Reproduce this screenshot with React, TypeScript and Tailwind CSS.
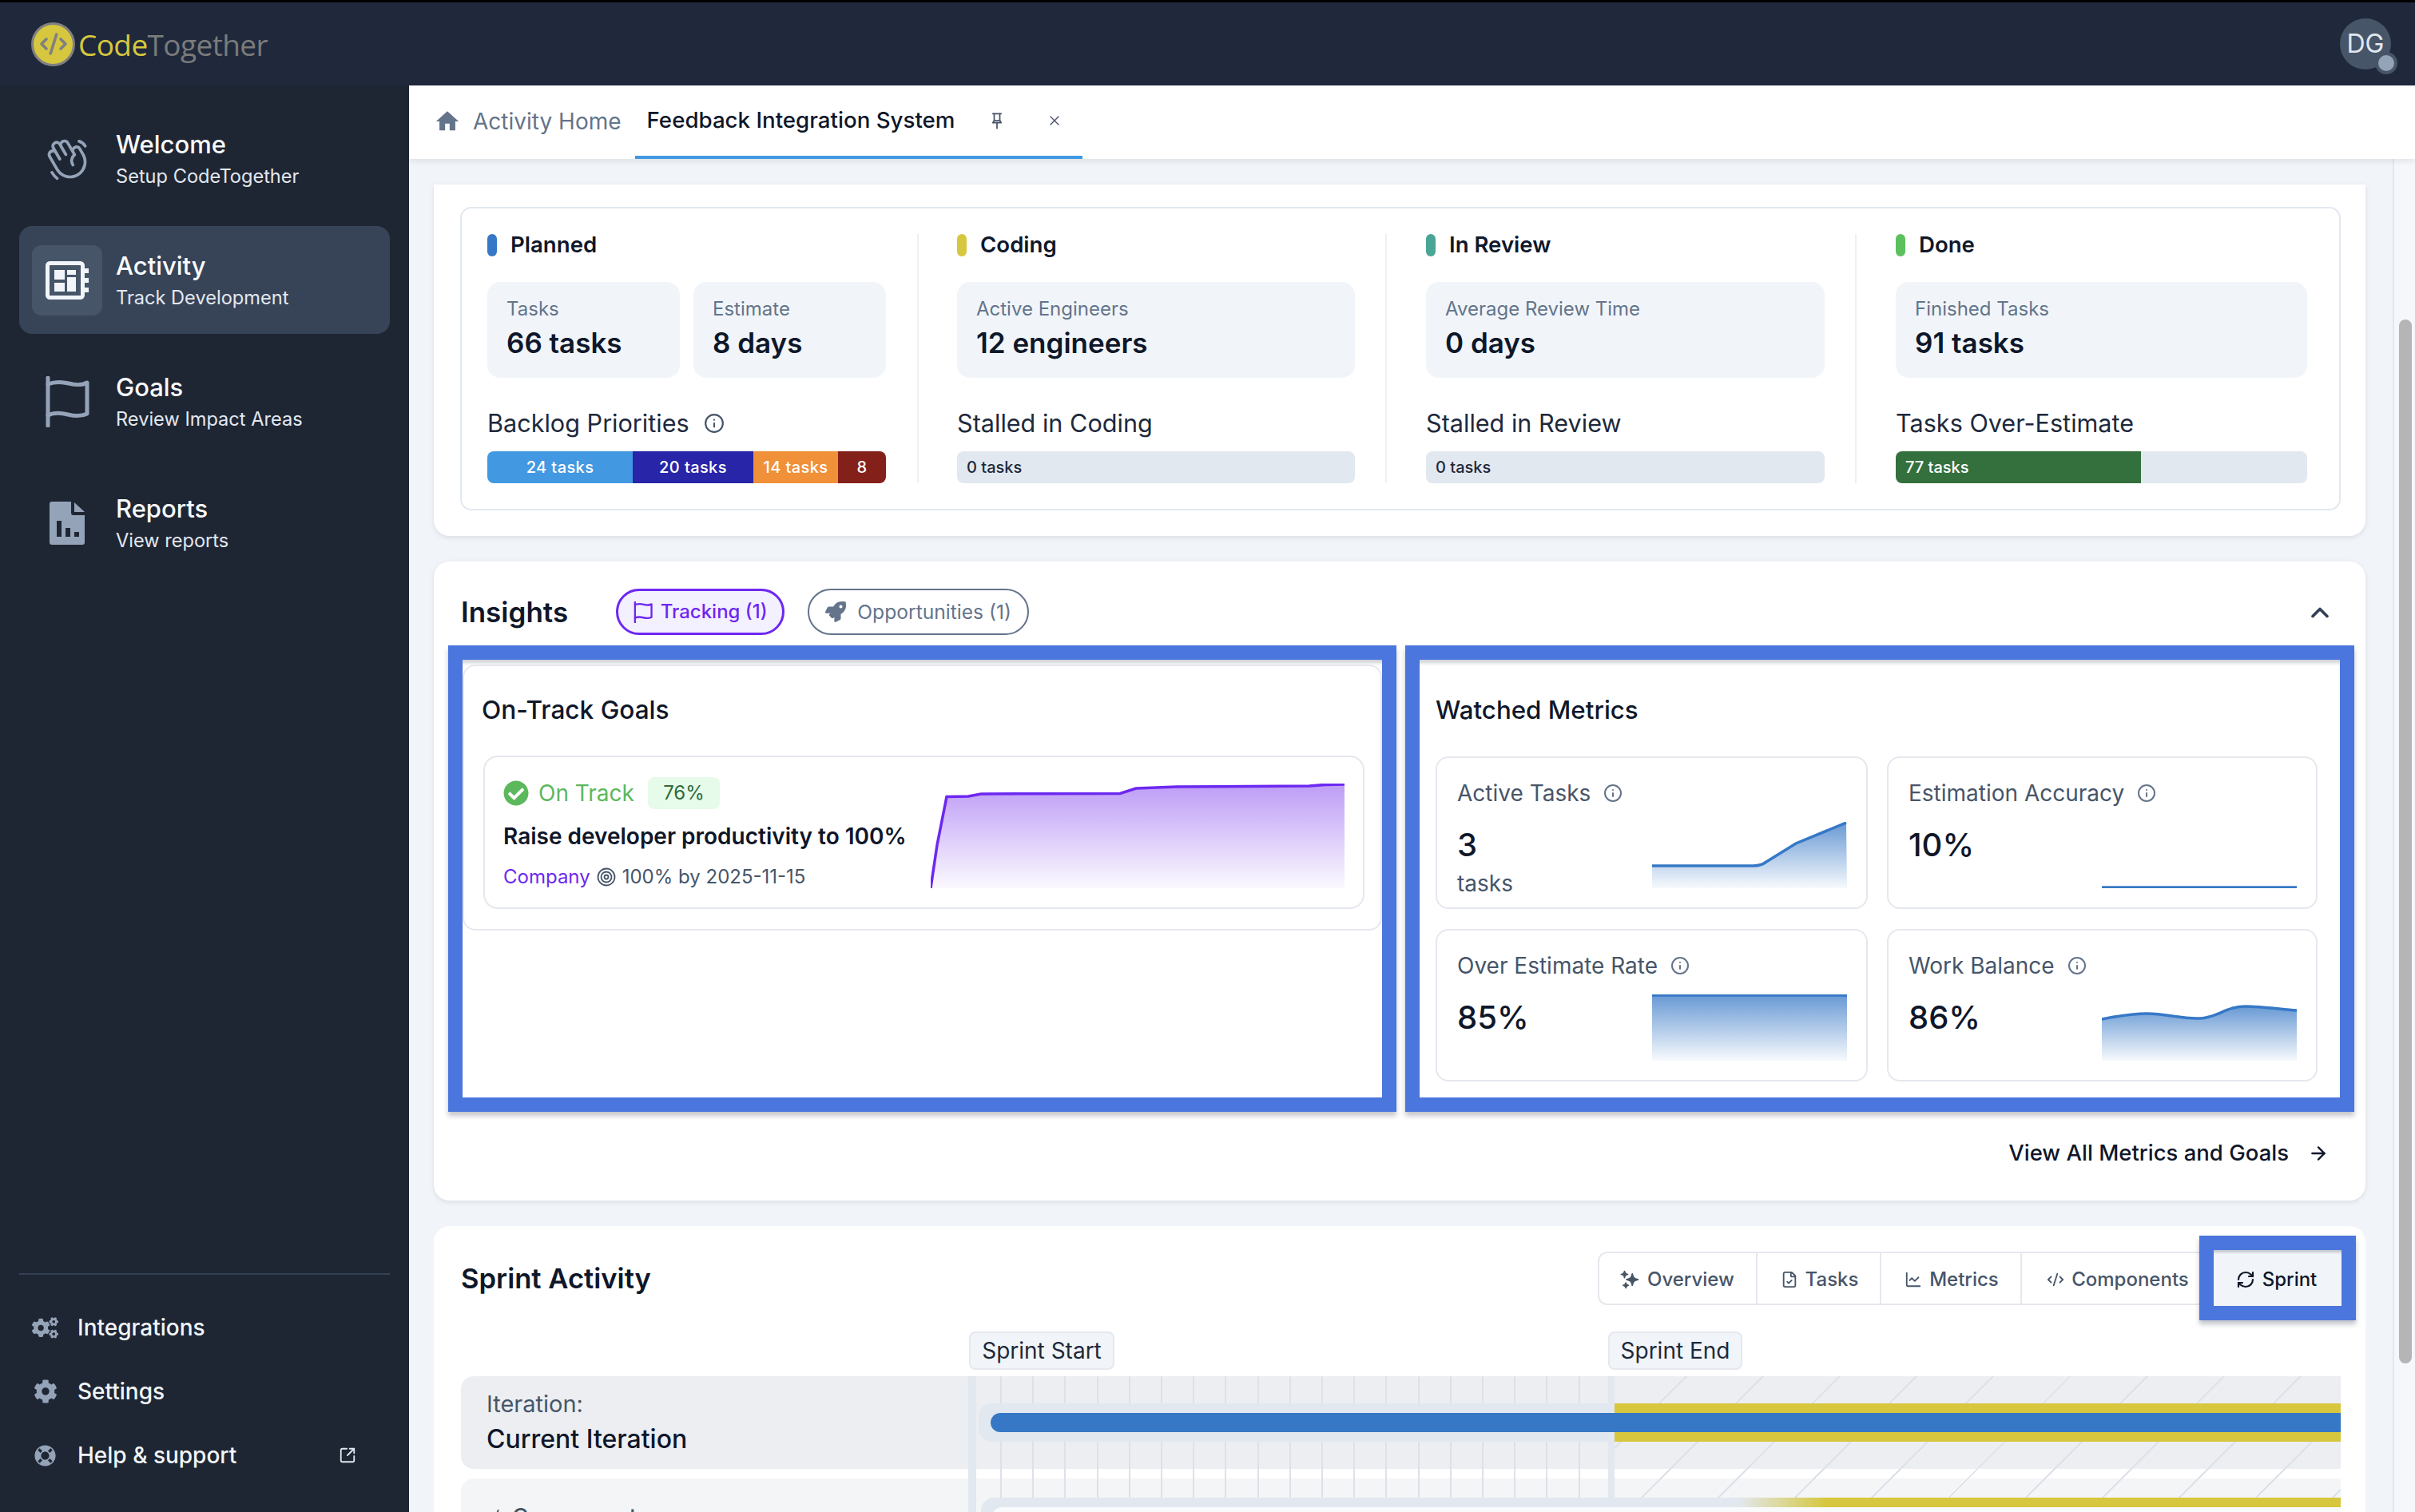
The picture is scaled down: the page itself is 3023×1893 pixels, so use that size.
import React from "react";
import { ArrowRight, ChevronUp, CodeXml, FileCheck, Info, ChartLine, RefreshCw, SquareArrowOutUpRight, X } from "lucide-react";
import { FaCheckCircle, FaCog, FaCogs, FaLifeRing, FaRocket } from "react-icons/fa";
import { MdHome } from "react-icons/md";
import { HiSparkles } from "react-icons/hi2";
import { PiHandWaving } from "react-icons/pi";

function FlagIcon({ className = "", sw = 5 }: { className?: string; sw?: number }) {
  return (
    <svg viewBox="0 0 56 64" fill="none" stroke="currentColor" strokeWidth={sw} strokeLinecap="round" strokeLinejoin="round" className={className}>
      <path d="M4 2v60" />
      <path d="M4 10C14 6 22 7 30 9s16 3 23-1v39c-8 4-16 3-24 1S12 45 4 49" />
    </svg>
  );
}

function ActivityIcon() {
  return (
    <svg viewBox="0 0 54 48" className="w-[54px] h-[48px]" fill="none">
      <rect x="2.5" y="2.5" width="44" height="43" rx="3" stroke="#f1f5f9" strokeWidth="5" />
      <rect x="11" y="11" width="13" height="12" fill="#f1f5f9" />
      <rect x="11" y="27" width="13" height="11" fill="#f1f5f9" />
      <rect x="27" y="11" width="11" height="6" fill="#f1f5f9" />
      <rect x="27" y="20" width="11" height="18" fill="#f1f5f9" />
      <rect x="48" y="9" width="6" height="6" fill="#f1f5f9" />
      <rect x="48" y="21" width="6" height="6" fill="#f1f5f9" />
      <rect x="48" y="33" width="6" height="6" fill="#f1f5f9" />
    </svg>
  );
}

function ReportIcon() {
  return (
    <svg viewBox="0 0 44 54" className="w-[44px] h-[54px]">
      <path
        fillRule="evenodd"
        fill="#94a3b8"
        d="M3 0h24v14a3 3 0 0 0 3 3h14v34a3 3 0 0 1-3 3H3a3 3 0 0 1-3-3V3a3 3 0 0 1 3-3zM9 24v20h6V24zM20 33v11h6V33zM31 38v6h6v-6z"
      />
      <path fill="#94a3b8" d="M31 1l13 12H31z" />
    </svg>
  );
}

function PinIcon() {
  return (
    <svg viewBox="0 0 16 24" className="w-[14px] h-[22px]" fill="none" stroke="#475569" strokeWidth="2" strokeLinecap="round" strokeLinejoin="round">
      <path d="M2 2h12" />
      <path d="M4 2v10M12 2v10" />
      <path d="M2 15l2-3h8l2 3z" />
      <path d="M8 15v8" />
    </svg>
  );
}

function Logo() {
  return (
    <div className="flex items-center gap-[4px]">
      <div className="w-[55px] h-[55px] rounded-full bg-[#d6c73e] border-[3px] border-[#808080] flex items-center justify-center">
        <CodeXml size={36} strokeWidth={2.4} className="text-[#808080]" />
      </div>
      <div className="font-['Open_Sans',sans-serif] text-[37px] leading-none tracking-[-0.6px]">
        <span className="text-[#d6c73e]">Code</span>
        <span className="text-[#7b7b7b]">Together</span>
      </div>
    </div>
  );
}

function NavItem({ icon, title, sub, active }: { icon: React.ReactNode; title: string; sub: string; active?: boolean }) {
  return (
    <div className={`flex items-center h-[135px] rounded-[16px] pl-[16px] gap-[17px] ${active ? "bg-[#374357]" : ""}`}>
      <div className={`w-[88px] h-[88px] rounded-[12px] flex items-center justify-center ${active ? "bg-[#475569]" : ""}`}>{icon}</div>
      <div className="flex flex-col">
        <div className="text-[31px] leading-[44px] font-medium text-[#f8fafc]">{title}</div>
        <div className="text-[23.6px] leading-[36px] text-[#e2e8f0]">{sub}</div>
      </div>
    </div>
  );
}

function FootItem({ icon, label, right }: { icon: React.ReactNode; label: string; right?: React.ReactNode }) {
  return (
    <div className="flex items-center h-[80px] pl-[16px] pr-[42px]">
      <div className="w-[33px] flex items-center justify-center text-[#94a3b8]">{icon}</div>
      <div className="ml-[24px] text-[28px] font-medium text-[#f1f5f9] flex-1">{label}</div>
      {right}
    </div>
  );
}

function Stat({ label, value, className = "flex-1" }: { label: string; value: string; className?: string }) {
  return (
    <div className={`h-[120px] rounded-[16px] bg-[#f1f5f9] pl-[24px] pt-[18px] ${className}`}>
      <div className="text-[24px] leading-[32px] text-[#64748b]">{label}</div>
      <div className="mt-[3px] text-[35px] leading-[46px] font-semibold text-[#0f172a]">{value}</div>
    </div>
  );
}

function Col({ color, title, children, className }: { color: string; title: string; children: React.ReactNode; className: string }) {
  return (
    <div className={`h-[312px] flex flex-col ${className}`}>
      <div className="flex items-center h-[28px]">
        <div className="w-[12px] h-[28px] rounded-full" style={{ backgroundColor: color }} />
        <div className="ml-[17px] text-[27.6px] font-semibold text-[#0f172a]">{title}</div>
      </div>
      {children}
    </div>
  );
}

function Sub({ children }: { children: React.ReactNode }) {
  return <div className="mt-[37px] h-[40px] flex items-center text-[30.6px] text-[#1e293b]">{children}</div>;
}

function EmptyBar() {
  return (
    <div className="mt-[15px] h-[40px] rounded-[8px] bg-[#e2e8f0] flex items-center pl-[12px] text-[20px] font-medium text-[#1e293b]">0 tasks</div>
  );
}

function OverviewCard() {
  return (
    <div className="rounded-b-[20px] bg-white pl-[33px] pr-[31px] pt-[28px] pb-[32px] shadow-[0_2px_6px_rgba(15,23,42,0.1)]">
      <div className="rounded-[14px] border-2 border-[#e2e8f0] h-[380px] pl-[32px] pt-[32px] flex">
        <Col color="#3678c6" title="Planned" className="w-[540px] pr-[39px] border-r-2 border-[#edf0f5]">
          <div className="mt-[32px] flex gap-[17px]">
            <Stat label="Tasks" value="66 tasks" />
            <Stat label="Estimate" value="8 days" />
          </div>
          <Sub>
            Backlog Priorities
            <Info size={26} strokeWidth={2} className="ml-[18px] text-[#475569]" />
          </Sub>
          <div className="mt-[15px] h-[40px] rounded-[8px] overflow-hidden flex text-[20px] font-medium text-white tracking-[0.4px]">
            <div className="w-[182px] bg-[#4299e1] flex items-center justify-center">24 tasks</div>
            <div className="w-[151px] bg-[#2825a8] flex items-center justify-center">20 tasks</div>
            <div className="w-[106px] bg-[#f09038] flex items-center justify-center">14 tasks</div>
            <div className="flex-1 bg-[#84201a] flex items-center justify-center">8</div>
          </div>
        </Col>
        <Col color="#d6c73e" title="Coding" className="w-[586px] pl-[48px] pr-[38px] border-r-2 border-[#edf0f5]">
          <div className="mt-[32px] flex">
            <Stat label="Active Engineers" value="12 engineers" />
          </div>
          <Sub>Stalled in Coding</Sub>
          <EmptyBar />
        </Col>
        <Col color="#4aa596" title="In Review" className="w-[588px] pl-[49px] pr-[38px] border-r-2 border-[#edf0f5]">
          <div className="mt-[32px] flex">
            <Stat label="Average Review Time" value="0 days" />
          </div>
          <Sub>Stalled in Review</Sub>
          <EmptyBar />
        </Col>
        <Col color="#5cc05f" title="Done" className="w-[564px] pl-[49px]">
          <div className="mt-[32px] flex">
            <Stat label="Finished Tasks" value="91 tasks" />
          </div>
          <Sub>Tasks Over-Estimate</Sub>
          <div className="mt-[15px] h-[40px] rounded-[8px] overflow-hidden bg-[#e2e8f0] flex">
            <div className="w-[307px] bg-[#33703d] flex items-center pl-[12px] text-[20px] font-medium text-white">77 tasks</div>
          </div>
        </Col>
      </div>
    </div>
  );
}

function GoalChart() {
  const line = "M0 131 L8 77 L20 16.5 L47 16 L63 13 L237 12.4 L257 6 L308 4 L474 3 L494 1.4 L518 1";
  return (
    <svg viewBox="0 0 518 131" className="w-[518px] h-[131px] shrink-0">
      <defs>
        <linearGradient id="gv" x1="0" y1="0" x2="0" y2="1">
          <stop offset="0" stopColor="#7c3aed" stopOpacity="0.5" />
          <stop offset="1" stopColor="#7c3aed" stopOpacity="0.03" />
        </linearGradient>
      </defs>
      <path d={`${line} L518 131 Z`} fill="url(#gv)" />
      <path d={line} fill="none" stroke="#6d28f0" strokeWidth="3.5" />
    </svg>
  );
}

function MetricChart({ id, line }: { id: string; line: string }) {
  return (
    <svg viewBox="0 0 244 83" className="w-[244px] h-[83px] shrink-0">
      <defs>
        <linearGradient id={id} x1="0" y1="0" x2="0" y2="1">
          <stop offset="0" stopColor="#3678c6" stopOpacity="0.75" />
          <stop offset="1" stopColor="#3678c6" stopOpacity="0.04" />
        </linearGradient>
      </defs>
      <path d={`${line} L244 83 L0 83 Z`} fill={`url(#${id})`} />
      <path d={line} fill="none" stroke="#3678c6" strokeWidth="3.5" />
    </svg>
  );
}

function Metric({ label, value, unit, id, line }: { label: string; value: string; unit?: string; id: string; line: string }) {
  return (
    <div className="h-[191px] rounded-[16px] border-2 border-[#e5e8ee] pl-[25px] pr-[24px] pt-[28px]">
      <div className="flex items-center h-[32px] text-[28px] text-[#475569]">
        {label}
        <Info size={24} strokeWidth={2} className="ml-[16px] text-[#64748b]" />
      </div>
      <div className="flex justify-between mt-[20px]">
        <div className="pt-[5px]">
          <div className="text-[40px] leading-[48px] font-medium text-[#0f172a]">{value}</div>
          {unit && <div className="mt-[6px] text-[28px] leading-[36px] text-[#475569]">{unit}</div>}
        </div>
        <MetricChart id={id} line={line} />
      </div>
    </div>
  );
}

function InsightsCard() {
  return (
    <div className="mt-[32px] rounded-[20px] bg-white pl-[18px] pr-[14px] pt-[34px] h-[800px] shadow-[0_2px_6px_rgba(15,23,42,0.1)]">
      <div className="flex items-center h-[58px] pl-[16px] pr-[25px]">
        <div className="text-[35px] font-semibold text-[#0f172a] pt-[1px]">Insights</div>
        <div className="ml-[60px] h-[58px] w-[211px] rounded-full border-[3px] border-[#6d28f0] bg-[#f3f0ff] flex items-center justify-center gap-[10px] text-[24px] font-medium text-[#6d28f0]">
          <FlagIcon className="w-[24px] h-[27px]" sw={5.5} />
          Tracking (1)
        </div>
        <div className="ml-[29px] h-[58px] w-[277px] rounded-full border-2 border-[#64748b] flex items-center justify-center gap-[14px] text-[24.6px] text-[#64748b]">
          <FaRocket size={26} />
          Opportunities (1)
        </div>
        <ChevronUp size={36} strokeWidth={2.4} className="ml-auto mt-[2px] text-[#334155]" />
      </div>
      <div className="mt-[13px] flex gap-[11px] h-[584px]">
        <div className="w-[1187px] border-[18px] border-[#4a76dd] bg-white pt-[6px] shadow-[0_5px_6px_rgba(15,23,42,0.25),inset_0_6px_4px_-2px_rgba(15,23,42,0.2)]">
          <div className="rounded-[16px] border-2 border-[#e5e8ee] h-[333px] pl-[22px] pr-[20px] pt-[35px]">
            <div className="h-[40px] flex items-center text-[31.6px] font-medium text-[#0f172a]">On-Track Goals</div>
            <div className="mt-[37px] ml-[2px] h-[192px] rounded-[18px] border-2 border-[#e5e8ee] flex justify-between pl-[23px] pr-[23px] pt-[25px]">
              <div>
                <div className="flex items-center h-[40px]">
                  <FaCheckCircle size={32} className="text-[#5cb85c]" />
                  <div className="ml-[12px] text-[28px] text-[#5cb85c]">On Track</div>
                  <div className="ml-[17px] w-[90px] h-[40px] rounded-[8px] bg-[#e6fbe9] flex items-center justify-center text-[24px] text-[#2f6b3a]">76%</div>
                </div>
                <div className="mt-[16px] h-[36px] flex items-center text-[28px] font-semibold text-[#0f172a]">Raise developer productivity to 100%</div>
                <div className="mt-[17px] h-[32px] flex items-center text-[24px] text-[#475569]">
                  <span className="text-[#6d28f0]">Company</span>
                  <svg viewBox="0 0 24 24" className="w-[24px] h-[24px] mx-[8px]" fill="none" stroke="#475569" strokeWidth="1.8">
                    <circle cx="12" cy="12" r="10.5" />
                    <circle cx="12" cy="12" r="6.5" />
                    <circle cx="12" cy="12" r="2.5" />
                  </svg>
                  100% by 2025-11-15
                </div>
              </div>
              <div className="pt-[8px]">
                <GoalChart />
              </div>
            </div>
          </div>
        </div>
        <div className="flex-1 border-[18px] border-[#4a76dd] bg-white pt-[8px] shadow-[0_5px_6px_rgba(15,23,42,0.25),inset_0_6px_4px_-2px_rgba(15,23,42,0.2)]">
          <div className="pl-[20px] pr-[28px] pt-[35px]">
            <div className="h-[40px] flex items-center text-[31.3px] font-medium text-[#0f172a]">Watched Metrics</div>
            <div className="mt-[38px] grid grid-cols-[541px_539px] gap-x-[24px] gap-y-[25px]">
              <Metric label="Active Tasks" value="3" unit="tasks" id="m1" line="M0 55 L127 55 C135 55 139 53 143 50 L180 27 L243 1" />
              <Metric label="Estimation Accuracy" value="10%" id="m2" line="M0 82 L244 82" />
              <Metric label="Over Estimate Rate" value="85%" id="m3" line="M0 1 L244 1" />
              <Metric label="Work Balance" value="86%" id="m4" line="M0 31 C20 27 40 24 57 24 C80 24 100 31 123 30 C145 29 155 15 180 15 C200 15 220 18 244 20" />
            </div>
          </div>
        </div>
      </div>
      <div className="mt-[34px] flex items-center justify-end pr-[32px] h-[36px] text-[27.5px] font-medium text-[#0f172a]">
        View All Metrics and Goals
        <ArrowRight size={26} strokeWidth={2.2} className="ml-[24px]" />
      </div>
    </div>
  );
}

function SprintTab({ icon, label, w }: { icon: React.ReactNode; label: string; w: string }) {
  return (
    <div className={`${w} flex items-center justify-center gap-[9px] pt-[3px] text-[24px] font-medium text-[#475569]`}>
      {icon}
      {label}
    </div>
  );
}

function SprintCard() {
  return (
    <div className="mt-[32px] rounded-t-[20px] bg-white pt-[12px] pl-[34px] pr-[12px] h-[400px]">
      <div className="flex items-center justify-between">
        <div className="text-[34.6px] font-semibold text-[#0f172a] pt-[2px]">Sprint Activity</div>
        <div className="flex items-center">
          <div className="h-[67px] flex rounded-l-[12px] border-2 border-r-0 border-[#e5e8ee] divide-x-2 divide-[#e5e8ee]">
            <SprintTab w="w-[198px] pr-[2px]" label="Overview" icon={<HiSparkles size={26} className="-scale-x-100" />} />
            <SprintTab w="w-[155px] pl-[2px]" label="Tasks" icon={<FileCheck size={22} strokeWidth={2} />} />
            <SprintTab w="w-[176px] pl-[2px]" label="Metrics" icon={<ChartLine size={22} strokeWidth={2} />} />
            <SprintTab w="w-[222px] pl-[18px]" label="Components" icon={<CodeXml size={22} strokeWidth={2} />} />
          </div>
          <div className="h-[106px] w-[196px] border-[18px] border-[#4a76dd] bg-[#f1f5f9] flex items-center justify-center gap-[9px] pt-[3px] pr-[3px] text-[24px] font-medium text-[#0f172a] shadow-[0_5px_6px_rgba(15,23,42,0.25),inset_0_5px_3px_-2px_rgba(15,23,42,0.2)]">
            <RefreshCw size={24} strokeWidth={2.2} />
            Sprint
          </div>
        </div>
      </div>
      <div className="mt-[14px] flex">
        <div className="ml-[636px] w-[182px] h-[48px] rounded-[8px] border-2 border-[#e5e8ee] bg-[#f1f5f9] flex items-center justify-center text-[28px] text-[#1e293b]">Sprint Start</div>
        <div className="ml-[618px] w-[168px] h-[48px] rounded-[8px] border-2 border-[#e5e8ee] bg-[#f1f5f9] flex items-center justify-center text-[28px] text-[#1e293b]">Sprint End</div>
      </div>
      <div className="mt-[8px] relative mr-[19px]">
        <div className="flex h-[116px] rounded-l-[16px] bg-[#eceef2]">
          <div className="w-[635px] pl-[32px] pt-[17px]">
            <div className="text-[29px] leading-[36px] text-[#475569]">Iteration:</div>
            <div className="mt-[4px] text-[32px] leading-[44px] font-medium text-[#0f172a]">Current Iteration</div>
          </div>
          <div className="flex-1 pl-[13px] flex items-center relative z-10">
            <div className="relative h-[48px] w-full rounded-l-[16px] bg-[#e2e8f0] flex justify-end overflow-hidden">
              <div className="w-[909px] bg-[#d6c73e]" />
              <div className="absolute left-[15px] right-0 top-[12px] h-[24px] rounded-l-full bg-[#3678c6]" />
            </div>
          </div>
        </div>
        <div className="mt-[12px] flex h-[116px] rounded-l-[16px] bg-[#f4f5f7]">
          <div className="w-[635px] pl-[32px] pt-[30px] flex items-start gap-[8px] text-[28px] leading-[36px] font-medium text-[#475569]">
            <CodeXml size={24} strokeWidth={2} className="mt-[6px]" />
            Component
          </div>
          <div className="flex-1 pl-[16px] pt-[24px] relative z-10">
            <div className="rounded-tl-[16px] h-[60px] bg-[linear-gradient(90deg,#e2e8f0_55.7%,#d6c73e_62.2%)] pl-[14px] pt-[12px]">
              <div className="h-full rounded-tl-[12px] bg-[#f8fafc]" />
            </div>
          </div>
        </div>
        <div className="absolute inset-y-0 left-[635px] right-0 flex">
          <div className="w-[10px] bg-[#e2e8f0]" />
          <div className="w-[791px] pl-[30px]">
            <div className="h-full bg-[repeating-linear-gradient(90deg,#dde1e9_0,#dde1e9_2px,transparent_2px,transparent_40.2px)]" />
          </div>
          <div className="w-[8px] bg-[#e2e8f0]" />
          <div className="flex-1 bg-[repeating-linear-gradient(135deg,transparent_0,transparent_62.4px,#dde1e9_62.4px,#dde1e9_64.4px,transparent_64.4px,transparent_68px)]" />
        </div>
      </div>
    </div>
  );
}

export default function App() {
  return (
    <div className="w-[3023px] h-[1893px] overflow-hidden flex flex-col font-['Inter',sans-serif] bg-[#f1f5f9]">
      <header className="h-[107px] shrink-0 bg-[#1f293b] border-t-[3px] border-black flex items-center justify-between pl-[39px] pr-[30px]">
        <Logo />
        <div className="relative w-[64px] h-[64px] rounded-full bg-[#475569] flex items-center justify-center text-[32px] text-[#e2e8f0]">
          DG
          <div className="absolute right-[-8px] bottom-[-6px] w-[28px] h-[28px] rounded-full bg-[#94a3b8] border-[4px] border-[#475569]" />
        </div>
      </header>
      <div className="flex flex-1 min-h-0">
        <aside className="w-[512px] shrink-0 bg-[#1f2633] flex flex-col justify-between px-[24px] pt-[24px] pb-[31px]">
          <nav className="flex flex-col gap-[17px]">
            <NavItem title="Welcome" sub="Setup CodeTogether" icon={<PiHandWaving size={60} className="text-[#94a3b8]" />} />
            <NavItem active title="Activity" sub="Track Development" icon={<ActivityIcon />} />
            <NavItem title="Goals" sub="Review Impact Areas" icon={<FlagIcon className="w-[56px] h-[64px] text-[#94a3b8]" />} />
            <NavItem title="Reports" sub="View reports" icon={<ReportIcon />} />
          </nav>
          <div className="border-t-2 border-[#334155] pt-[26px]">
            <FootItem label="Integrations" icon={<FaCogs size={33} />} />
            <FootItem label="Settings" icon={<FaCog size={30} />} />
            <FootItem label="Help & support" icon={<FaLifeRing size={27} />} right={<SquareArrowOutUpRight size={22} strokeWidth={2} className="text-[#e2e8f0]" />} />
          </div>
        </aside>
        <main className="flex-1 min-w-0 flex flex-col">
          <div className="h-[92px] shrink-0 bg-white flex items-stretch pl-[31px] shadow-[0_2px_8px_rgba(15,23,42,0.1)] relative z-20">
            <div className="flex items-center gap-[15px] pb-[2px] text-[28px] text-[#64748b]">
              <MdHome size={34} />
              Activity Home
            </div>
            <div className="ml-[17px] w-[560px] border-b-4 border-[#4299e1] flex items-center pl-[15px] pb-[1px] text-[27.7px] font-medium text-[#0f172a]">
              Feedback Integration System
              <div className="ml-[46px]">
                <PinIcon />
              </div>
              <X size={20} strokeWidth={1.6} className="ml-[55px] text-[#475569]" />
            </div>
          </div>
          <div className="flex flex-1 min-h-0">
            <div className="flex-1 min-w-0 pl-[31px] pr-[34px] pt-[32px] overflow-hidden">
              <OverviewCard />
              <InsightsCard />
              <SprintCard />
            </div>
            <div className="w-[28px] shrink-0 border-l-2 border-[#e2e8f0] bg-[#f5f7fb] pt-[201px] pl-[6px]">
              <div className="w-[16px] h-[1307px] rounded-full bg-[#b5b5b5]" />
            </div>
          </div>
        </main>
      </div>
    </div>
  );
}
